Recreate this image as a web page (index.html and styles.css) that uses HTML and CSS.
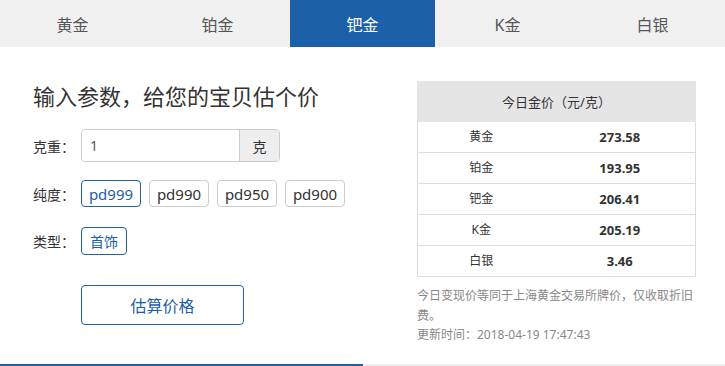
FILE: index.html
```html
<!DOCTYPE html>
<html lang="zh-CN">
<head>
<meta charset="UTF-8">
<meta name="viewport" content="width=device-width, initial-scale=1.0">
<title>估价</title>
<link rel="stylesheet" href="styles.css">
</head>
<body>
    <div class="tabs">
        <div class="tab">黄金</div>
        <div class="tab">铂金</div>
        <div class="tab active">钯金</div>
        <div class="tab">K金</div>
        <div class="tab">白银</div>
    </div>
    <div class="main">
        <div class="left-section">
            <h2 class="title">输入参数，给您的宝贝估个价</h2>
            <div class="form-row">
                <span class="label">克重：</span>
                <div class="input-group">
                    <input type="text" class="weight" value="1">
                    <span class="addon">克</span>
                </div>
            </div>
            <div class="form-row purity">
                <span class="label">纯度：</span>
                <div class="options">
                    <button class="opt selected">pd999</button>
                    <button class="opt">pd990</button>
                    <button class="opt">pd950</button>
                    <button class="opt">pd900</button>
                </div>
            </div>
            <div class="form-row kind">
                <span class="label">类型：</span>
                <div class="options">
                    <button class="opt selected small">首饰</button>
                </div>
            </div>
            <button class="calc">估算价格</button>
        </div>
        <div class="right-section">
            <table class="price-table">
                <tr><th colspan="2">今日金价（元/克）</th></tr>
                <tr><td>黄金</td><td class="num">273.58</td></tr>
                <tr><td>铂金</td><td class="num">193.95</td></tr>
                <tr><td>钯金</td><td class="num">206.41</td></tr>
                <tr><td>K金</td><td class="num">205.19</td></tr>
                <tr><td>白银</td><td class="num">3.46</td></tr>
            </table>
            <p class="note">今日变现价等同于上海黄金交易所牌价，仅收取折旧费。</p>
            <p class="note">更新时间：2018-04-19 17:47:43</p>
        </div>
    </div>
    <div class="bottom-bar">
        <div class="bar-on"></div>
    </div>
</body>
</html>
```

FILE: styles.css
```css
body {
    margin: 0;
    padding: 0;
    font-family: "Noto Sans", "Noto Sans CJK SC", sans-serif;
    color: #333;
    background-color: #fff;
}
.tabs {
    display: flex;
    height: 47px;
    background-color: #f0f0f0;
}
.tab {
    flex: 1;
    display: flex;
    align-items: center;
    justify-content: center;
    font-size: 16px;
    color: #555;
}
.tab.active {
    background-color: #1c60a8;
    color: #fff;
}
.main {
    display: flex;
    height: 317px;
    padding: 34px 29px 0 33px;
    box-sizing: border-box;
}
.left-section {
    flex: 1;
}
.title {
    margin: 0 0 18px 0;
    font-size: 22px;
    font-weight: normal;
    line-height: 30px;
    color: #333;
}
.form-row {
    display: flex;
    align-items: center;
}
.label {
    width: 48px;
    font-size: 14px;
}
.input-group {
    display: flex;
    height: 33px;
    width: 199px;
    border: 1px solid #ccc;
    border-radius: 4px;
    box-sizing: border-box;
    overflow: hidden;
}
.weight {
    flex: 1;
    width: 0;
    border: none;
    padding: 0 8px;
    font-size: 14px;
    font-family: inherit;
    color: #555;
    outline: none;
}
.addon {
    width: 39px;
    display: flex;
    align-items: center;
    justify-content: center;
    background-color: #eee;
    border-left: 1px solid #ccc;
    font-size: 14px;
    color: #333;
}
.purity {
    margin-top: 18px;
}
.kind {
    margin-top: 20px;
}
.options {
    display: flex;
    gap: 8px;
}
.opt {
    width: 60px;
    height: 27px;
    padding: 0;
    border: 1px solid #ccc;
    border-radius: 4px;
    background-color: #fff;
    font-family: inherit;
    font-size: 15px;
    color: #333;
}
.opt.selected {
    border-color: #1c60a8;
    color: #1c60a8;
}
.opt.small {
    height: 28px;
    width: 46px;
    font-size: 14px;
}
.calc {
    display: block;
    margin: 30px 0 0 48px;
    width: 163px;
    height: 40px;
    border: 1px solid #1c60a8;
    border-radius: 4px;
    background-color: #fff;
    color: #1c60a8;
    font-family: inherit;
    font-size: 16px;
}
.right-section {
    width: 279px;
}
.price-table {
    width: 100%;
    border-collapse: collapse;
    font-size: 12px;
    line-height: 18px;
}
.price-table th {
    height: 39px;
    padding: 0;
    background-color: #e5e5e5;
    border: 1px solid #e5e5e5;
    font-size: 13px;
    font-weight: normal;
    color: #333;
}
.price-table td {
    height: 30px;
    padding: 0;
    border: 1px solid #ddd;
    border-left: none;
    border-right: none;
    text-align: center;
    width: 50%;
}
.price-table td:first-child {
    border-left: 1px solid #ddd;
    padding-right: 12px;
}
.price-table td:last-child {
    border-right: 1px solid #ddd;
    padding-right: 12px;
}
.price-table .num {
    font-size: 13px;
    font-weight: bold;
}
.note {
    margin: 0;
    font-size: 12px;
    line-height: 19.5px;
    color: #888;
}
.price-table + .note {
    margin-top: 9px;
}
.bottom-bar {
    display: flex;
    height: 2px;
    background-color: #eee;
}
.bar-on {
    width: 363px;
    background-color: #1c60a8;
}
```
